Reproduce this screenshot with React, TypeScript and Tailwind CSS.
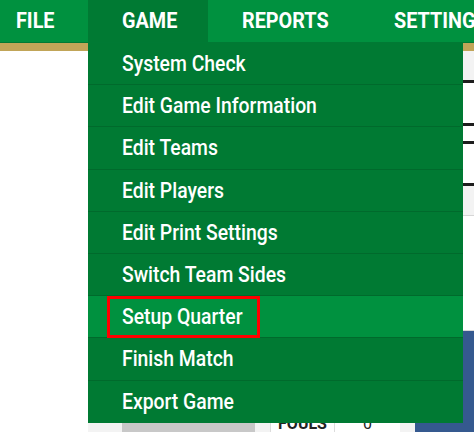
const tabs = [
	{ label: "FILE", cls: "w-[88px] pl-4" },
	{ label: "GAME", cls: "w-[120px] pl-[34px] bg-[#007a33]" },
	{ label: "REPORTS", cls: "w-[152px] pl-[34px]" },
	{ label: "SETTINGS", cls: "w-[150px] pl-[34px]" },
];

const gameMenu = [
	"System Check",
	"Edit Game Information",
	"Edit Teams",
	"Edit Players",
	"Edit Print Settings",
	"Switch Team Sides",
	"Setup Quarter",
	"Finish Match",
	"Export Game",
];

// Roboto squeezed to look like the condensed face in the app
const Condensed = ({ children }: { children: string }) => (
	<span className="inline-block origin-left scale-x-[0.88] whitespace-nowrap">{children}</span>
);

export default function App() {
	return (
		<div className="relative h-[433px] w-[474px] overflow-hidden bg-white font-['Roboto',sans-serif]">
			{/* top nav */}
			<nav className="flex h-[43px] bg-[#00913f] border-b border-[#007a34]">
				{tabs.map((tab) => (
					<div
						key={tab.label}
						className={`flex shrink-0 items-center text-[22.5px] font-bold text-white ${tab.cls}`}
					>
						<Condensed>{tab.label}</Condensed>
					</div>
				))}
			</nav>
			<div className="h-2 bg-[#c1a558]" />

			{/* page behind the menu */}
			<div className="flex h-[381px]">
				<div className="w-[88px] bg-white" />
				<div className="flex flex-1 flex-col">
					<div className="h-[29px] bg-[#f3f3f3]" />
					<div className="h-[3px] bg-[#1e1e1e]" />
					<div className="h-[40px] bg-white" />
					<div className="h-[3px] bg-[#1e1e1e]" />
					<div className="h-[15px] bg-white" />
					<div className="h-[3px] bg-[#1e1e1e]" />
					<div className="h-[39px] bg-white" />
					<div className="h-[3px] bg-[#1e1e1e]" />
					<div className="h-[30px] bg-[#f3f3f3] border-b border-[#d6d6d6]" />
					<div className="h-[115px] bg-white border-b border-[#d6d6d6]" />
					<div className="flex flex-1">
						<div className="flex-1 bg-[#f3f3f3]" />
						<div className="w-[59px] bg-[#35598f]" />
					</div>
					<div className="flex h-[11px] bg-[#f3f3f3]">
						<div className="w-[34px]" />
						<div className="w-[133px] bg-[#c8c8c8]" />
						<div className="w-[15px]" />
						<div className="w-[65px] overflow-hidden border-x border-[#dcdcdc] bg-white text-center text-[16px] leading-[6px] font-bold text-[#222]">
							FOULS
						</div>
						<div className="w-[65px] overflow-hidden bg-white text-center text-[16px] leading-[6px] text-[#222]">
							0
						</div>
						<div className="w-[15px]" />
						<div className="flex-1 bg-[#35598f]" />
					</div>
				</div>
			</div>

			{/* GAME dropdown */}
			<ul className="absolute left-[88px] top-[43px] w-[375px] bg-[#007a33]">
				{gameMenu.map((item) => (
					<li
						key={item}
						className={`flex h-[42.2px] items-center border-b border-[#006a2c] pl-[34px] text-[22px] font-medium text-white last:border-b-0 ${
							item === "Setup Quarter" ? "bg-[#00913f]" : ""
						}`}
					>
						{item === "Setup Quarter" ? (
							<span className="-ml-[15px] flex h-[42px] w-[153px] items-center border-[3px] border-[#ff0000] pl-3">
								<Condensed>{item}</Condensed>
							</span>
						) : (
							<Condensed>{item}</Condensed>
						)}
					</li>
				))}
			</ul>
		</div>
	);
}
